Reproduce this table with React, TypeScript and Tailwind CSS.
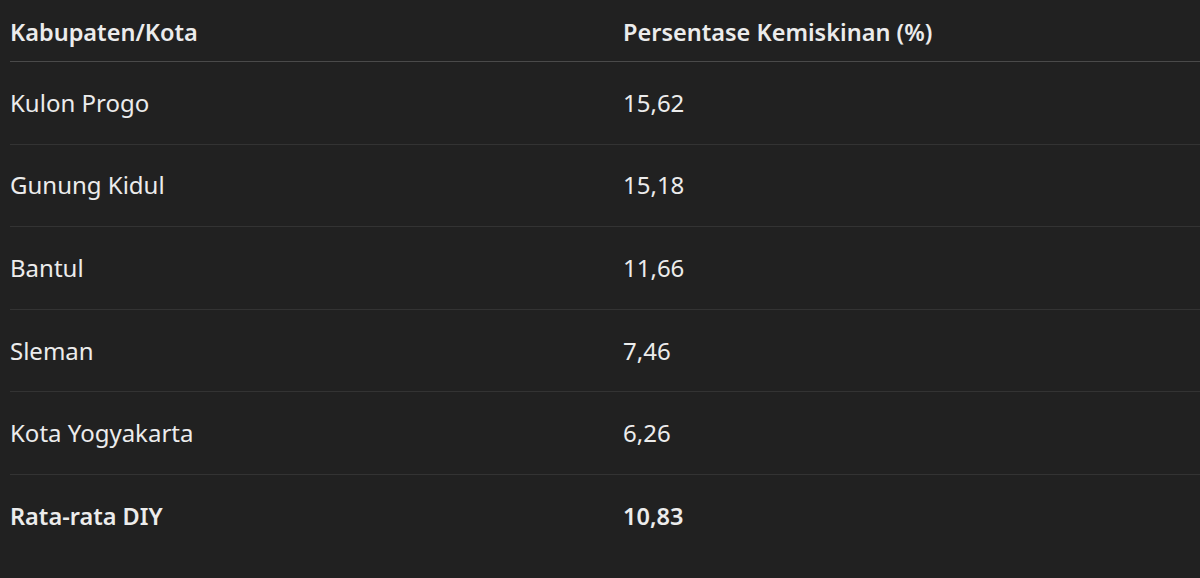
const rows = [
  { name: "Kulon Progo", value: "15,62" },
  { name: "Gunung Kidul", value: "15,18" },
  { name: "Bantul", value: "11,66" },
  { name: "Sleman", value: "7,46" },
  { name: "Kota Yogyakarta", value: "6,26" },
];

export default function App() {
  return (
    <div className="h-[578px] w-[1200px] overflow-hidden bg-[#212121] pl-[10px] text-[#ececec] font-['Noto_Sans',sans-serif] text-[24px]">
      <div className="grid h-[62px] grid-cols-[613px_1fr] items-center border-b border-[#4a4a4a] pt-[4px] text-[23.5px] font-semibold">
        <div>Kabupaten/Kota</div>
        <div>Persentase Kemiskinan (%)</div>
      </div>
      {rows.map((r) => (
        <div
          key={r.name}
          className="grid h-[82.6px] grid-cols-[613px_1fr] items-center border-b border-[#333333]"
        >
          <div>{r.name}</div>
          <div>{r.value}</div>
        </div>
      ))}
      <div className="grid h-[82.6px] grid-cols-[613px_1fr] items-center text-[23.5px] font-semibold">
        <div>Rata-rata DIY</div>
        <div>10,83</div>
      </div>
    </div>
  );
}
